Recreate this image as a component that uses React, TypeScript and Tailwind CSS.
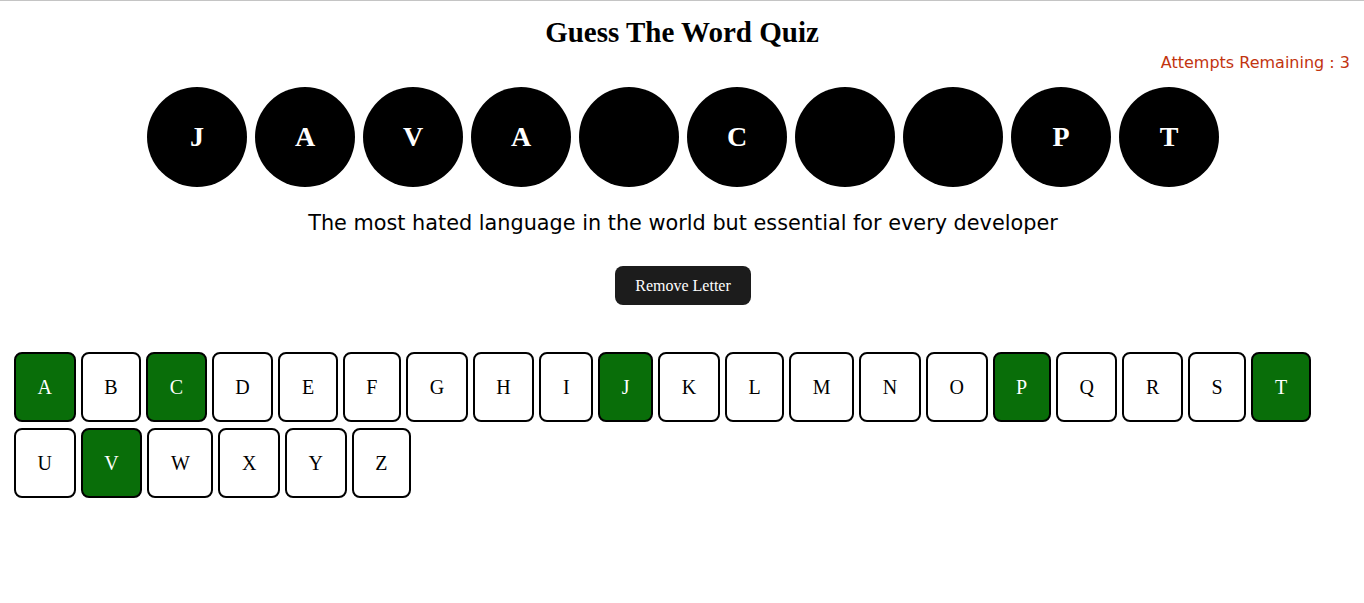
const word = ['J', 'A', 'V', 'A', '', 'C', '', '', 'P', 'T'];
const letters = 'ABCDEFGHIJKLMNOPQRSTUVWXYZ'.split('');
const used = ['A', 'C', 'J', 'P', 'T', 'V'];

export default function App() {
    return (
        <main className="min-h-screen bg-white border-t border-[#c4c4c4] font-['Liberation_Serif',serif]">
            <h1 className="pt-[15px] text-center text-[29px] leading-[32px] font-bold text-black">Guess The Word Quiz</h1>
            <p className="mt-[5px] pr-[14px] text-right text-[16px] leading-[19px] text-[#c2340f] font-['DejaVu_Sans',sans-serif]">
                Attempts Remaining : 3
            </p>
            <div className="mt-[15px] pl-[2px] flex justify-center gap-[8px]">
                {word.map((ch, i) => (
                    <div
                        key={i}
                        className="w-[100px] h-[100px] rounded-full bg-black flex items-center justify-center text-white text-[28px] font-bold"
                    >
                        {ch}
                    </div>
                ))}
            </div>
            <p className="mt-[24px] pl-[2px] text-center text-[20.8px] leading-[24px] text-black font-['DejaVu_Sans',sans-serif]">
                The most hated language in the world but essential for every developer
            </p>
            <div className="mt-[31px] pl-[2px] flex justify-center">
                <button className="h-[39px] px-[20px] rounded-[8px] bg-[#1c1c1c] text-white text-[16px]">
                    Remove Letter
                </button>
            </div>
            <div className="mt-[47px] px-[14px] flex flex-wrap gap-x-[5px] gap-y-[6px]">
                {letters.map((l) => (
                    <button
                        key={l}
                        className={
                            'h-[70px] px-[21.6px] border-2 border-black rounded-[8px] text-[20px] ' +
                            (used.includes(l) ? 'bg-[#096e09] text-white' : 'bg-white text-black')
                        }
                    >
                        {l}
                    </button>
                ))}
            </div>
        </main>
    );
}
